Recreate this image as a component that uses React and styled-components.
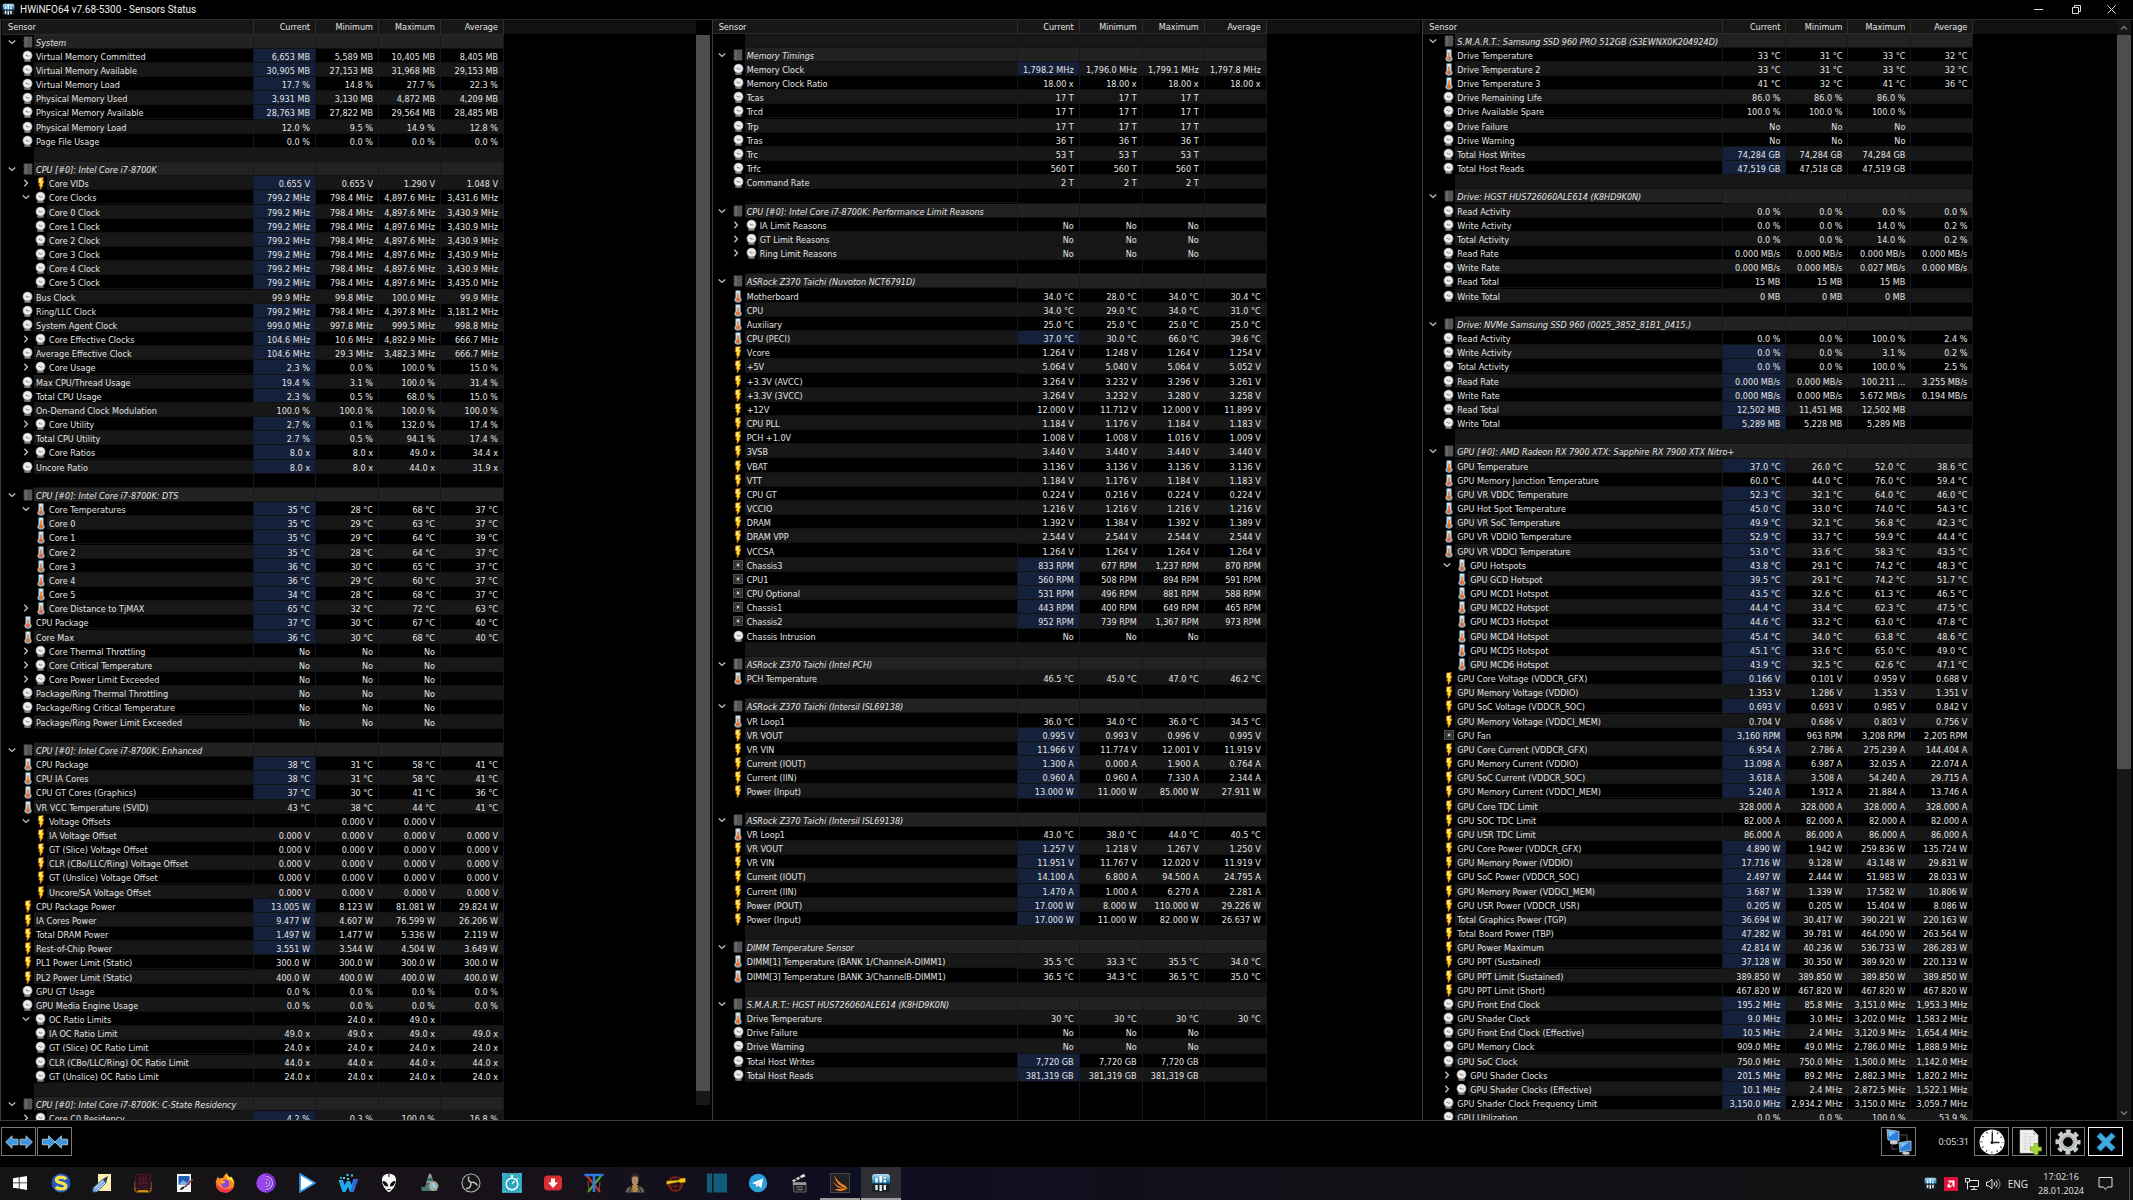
import React from 'react'
import styled, { createGlobalStyle } from 'styled-components';

const GlobalStyle = createGlobalStyle`
  * {
    box-sizing: border-box;
  }

  body {
    margin: 0;
    background: #000;
    color: #e4e4e4;
    font-family: 'DejaVu Sans Condensed', 'DejaVu Sans', sans-serif;
    font-size: 9px;
    overflow: hidden;
  }

  button {
    margin: 0;
    padding: 0;
    border: 0;
    background: none;
    color: inherit;
    font: inherit;
  }

  svg {
    display: block;
    flex: none;
  }
`

const Window = styled.div`
    display: flex;
    flex-direction: column;
    height: 100vh;
`

const TitleBar = styled.header`
    display: flex;
    align-items: center;
    height: 20px;
    padding: 0 5px 0 2px;
    border-bottom: 1px solid #2c2c2c;
`

const Title = styled.h1`
    flex: 1;
    margin: 0 0 0 5px;
    font-family: Roboto, 'Open Sans', sans-serif;
    font-size: 10px;
    line-height: 18px;
    font-weight: 400;
    color: #f0f0f0;
`

const WindowButton = styled.button`
    display: flex;
    align-items: center;
    justify-content: center;
    width: 38px;
    height: 18px;

    &:last-child {
      width: 33px;
    }
`

const Panels = styled.main`
    display: flex;
    flex: 1;
    min-height: 0;
    border-bottom: 1px solid #3a3a3a;
`

const Panel = styled.section`
    display: flex;
    flex: 1;
    min-width: 0;
    padding-right: 2px;
    border-left: 1px solid #3a3a3a;

    &:first-child {
      padding-left: 1px;
    }
`

const List = styled.div`
    flex: 1;
    min-width: 0;
    overflow: hidden;
    background: linear-gradient(#111 14px, #000 14px);
`

const Table = styled.table`
    table-layout: fixed;
    width: 0;
    border-spacing: 0;
    white-space: nowrap;
    line-height: 12px;
`

const HeadCell = styled.th`
    height: ${props => props.$tall ? 15 : 14}px;
    padding: 0 5px 0 6px;
    border-right: 1px solid #2e2e2e;
    border-bottom: 1px solid #2a2a2a;
    background: #171717;
    font-weight: 400;
    text-align: ${props => props.$left ? 'left' : 'right'};
`

const rowColors = { head: '#222', stripe: '#171717', plain: '#000' }

const Row = styled.tr`
    height: 14px;
    --row: ${props => rowColors[props.$kind]};

    &:nth-child(6n) {
      height: 15px;
    }
`

const Cell = styled.td`
    padding: 2px 5px 0 0;
    border-right: 1px solid #101a26;
    background: ${props => props.$hot ? '#15213a' : 'var(--row)'};
    box-shadow: inset 0 -1px #111;
    text-align: right;
    vertical-align: top;
`

const NameCell = styled.th`
    padding: 0;
    border-right: 1px solid #101a26;
    font-weight: 400;
    text-align: left;
    vertical-align: top;
`

const Name = styled.div`
    display: flex;
    height: 14px;
`

const Slot = styled.span`
    display: flex;
    flex: none;
    align-items: center;
    justify-content: ${props => props.$start ? 'flex-start' : 'center'};
    width: ${props => props.$wide ? 19 : 13}px;
`

const NameText = styled.span`
    flex: 1;
    padding: 2px 0 0 2px;
    background: var(--row);
    box-shadow: inset 0 -1px #111;
    font-style: ${props => props.$head ? 'italic' : 'normal'};
`

const Toggle = styled.button`
    display: flex;
    align-items: center;
    justify-content: center;
    width: 9px;
    height: 13px;
`

const Filler = styled.td`
    height: 60px;
    border-right: 1px solid #101a26;
`

const ScrollBar = styled.div`
    display: flex;
    flex-direction: column;
    width: 14px;
`

const ScrollArrow = styled.button`
    display: flex;
    align-items: center;
    justify-content: center;
    height: 15px;
    background: #171717;
    visibility: ${props => props.$lit ? 'visible' : 'hidden'};
`

const Thumb = styled.div`
    flex: ${props => props.$part};
    background: #4d4d4d;
`

const Track = styled.div`
    flex: ${props => props.$part};
    background: #171717;
`

const Toolbar = styled.div`
    display: flex;
    align-items: center;
    gap: 3px;
    height: 46px;
    padding: 0 10px 5px 1px;
`

const ToolGroup = styled.div`
    display: flex;
    gap: 1px;
    flex: 1;
`

const ToolButton = styled.button`
    display: flex;
    align-items: center;
    justify-content: center;
    width: 35px;
    height: 29px;
    border: 1px solid ${props => props.$focused ? '#f2f2f2' : '#777'};
`

const Elapsed = styled.span`
    width: 52px;
    padding-right: 2px;
    text-align: right;
    font-family: 'Open Sans', 'Noto Sans', sans-serif;
    font-size: 9px;
`

const TaskBar = styled.footer`
    display: flex;
    align-items: center;
    height: 33px;
    background: linear-gradient(90deg, #141414, #17121a 26%, #0e0e22 40%, #111118 62%, #141414);
    font-family: 'Open Sans', 'Noto Sans', sans-serif;
`

const Tasks = styled.nav`
    display: flex;
    flex: 1;
    gap: 1px;
    height: 33px;
`

const Task = styled.button`
    display: flex;
    align-items: center;
    justify-content: center;
    width: 40px;
    border-bottom: 2px solid ${props => props.$running ? '#9d9d9d' : 'transparent'};
    background: ${props => props.$active ? '#2e2e33' : 'none'};
`

const Tray = styled.div`
    display: flex;
    align-items: center;
    gap: 7px;
    height: 33px;
    font-size: 10px;
`

const Clock = styled.time`
    margin: 0 7px 0 3px;
    text-align: center;
    font-size: 9px;
    line-height: 14px;
`

const ShowDesktop = styled.button`
    width: 4px;
    height: 33px;
    margin-left: 9px;
    border-left: 1px solid #4a4a4a;
`

/* row icons */

const ChipIcon = () => (
    <svg width="10" height="13" viewBox="0 0 10 13">
        <path d="M0 2h10M0 4.5h10M0 7h10M0 9.5h10" stroke="#3c3c3c" />
        <rect x="1" y="0.5" width="8" height="11" fill="#555" />
        <path d="M2 1h2v10H2z" fill="#686868" />
    </svg>
)

const DialIcon = () => (
    <svg width="11" height="13" viewBox="0 0 11 13">
        <ellipse cx="5.5" cy="10.4" rx="3.6" ry="1.5" fill="#6d6d6d" />
        <circle cx="5.5" cy="5.6" r="4.9" fill="#a2a2a2" />
        <circle cx="5.5" cy="5.5" r="4" fill="#ececec" />
        <path d="M5.6 6 3.8 5" stroke="#6a6a6a" />
        <path d="M5.4 6h2.3" stroke="#a98f8f" />
    </svg>
)

const ThermoIcon = () => (
    <svg width="8" height="13" viewBox="0 0 8 13">
        <path d="M1.4 .4H6.6V7.4Q8 8.800 7.600 10.800 6.600 12.800 4 12.800T.4 10.800Q0 8.800 1.400 7.400Z" fill="#8fb9d3" />
        <path d="M2.4 .8H5.6V8H2.400Z" fill="#d9e8f0" />
        <path d="M4 3.600v6" stroke="#ee7a34" strokeWidth="1.700" />
        <circle cx="4" cy="9.600" r="2" fill="#ee6a1f" />
    </svg>
)

const BoltIcon = () => (
    <svg width="8" height="13" viewBox="0 0 8 13">
        <path d="M1.6 1 6.4.4 5.6 3.8 7 4 5.4 8 6.2 8.2 3.2 12.8 3 9 1.8 8.8 2.6 6 1.2 5.8Z" fill="#ffd924" stroke="#b8611c" strokeWidth=".7" />
        <path d="M2.6 1.6 4.4 1.4 3.6 5 2.2 5Z" fill="#fff6b0" />
    </svg>
)

const FanIcon = () => (
    <svg width="10" height="11" viewBox="0 0 10 11">
        <rect x=".5" y=".5" width="9" height="9" fill="#242424" stroke="#515151" />
        <path d="M2 2l6 6M8 2 2 8M5 1.5v7M1.5 5h7" stroke="#737373" strokeWidth=".7" />
        <circle cx="5" cy="5" r="1.2" fill="#d8c4c4" />
    </svg>
)

const rowIcons = { dial: DialIcon, temp: ThermoIcon, volt: BoltIcon, fan: FanIcon }

const Chevron = ({ open }) => (
    <svg width="8" height="8" viewBox="0 0 8 8" fill="none" stroke="#bdbdbd" strokeWidth="1.4">
        <path d={open ? 'M.8 2.4 4 5.4 7.2 2.4' : 'M2.4 .8 5.4 4 2.4 7.2'} />
    </svg>
)

/* window and toolbar icons */

const AppIcon = ({ size }) => (
    <svg width={size} height={size} viewBox="0 0 20 20">
        <defs>
            <linearGradient id="appSky" x2="0" y2="1">
                <stop offset="0" stopColor="#b5dff2" />
                <stop offset="1" stopColor="#0a6ba6" />
            </linearGradient>
        </defs>
        <rect x="1" y="1" width="18" height="18" rx="3" fill="#1b2228" />
        <path d="M1 10.5V4q0-3 3-3h12q3 0 3 3v6.5z" fill="url(#appSky)" />
        <path d="M5.5 5v4.5M9.7 3v6.5M13.8 7v2.5" stroke="#fff" strokeWidth="2.4" />
        <path d="M5.5 12v5M9.7 12v6M13.8 12v5" stroke="#e6eaec" strokeWidth="2.4" />
        <path d="M13.8 4v1.5" stroke="#fff" strokeWidth="2" />
    </svg>
)

const ExpandIcon = () => (
    <svg width="28" height="14" viewBox="0 0 28 14" fill="#3c97e0" stroke="#c9d6e0" strokeWidth=".8">
        <path d="M.6 7 7 .8v3.4h6v5.6H7v3.4Z" />
        <path d="M27.4 7 21 .8v3.4h-6v5.6h6v3.4Z" />
    </svg>
)

const ShrinkIcon = () => (
    <svg width="28" height="14" viewBox="0 0 28 14" fill="#3c97e0" stroke="#c9d6e0" strokeWidth=".8">
        <path d="M14 7 7.6 .8v3.4H1.4v5.6h6.2v3.4Z" />
        <path d="M14 7 20.4 .8v3.4h6.2v5.6h-6.2v3.4Z" />
    </svg>
)

const NetworkIcon = () => (
    <svg width="26" height="26" viewBox="0 0 26 26">
        <path d="M14 6h7v6M6 15v5h5" fill="none" stroke="#555" />
        <path d="M4 12h7l1 2.5q-4 1.8-8 0zM17 23h6l1 2q-4 1.5-8 0z" fill="#c9ccce" />
        <path d="M1 .5l12 2v9.5L2 11Z" fill="#2b7fd8" stroke="#c7d4df" strokeWidth=".8" />
        <path d="M2 1.5l8 1.4L3 8Z" fill="#7fc0f5" />
        <path d="M13 13.5l12-1.5v9.5l-11 1.5Z" fill="#2b7fd8" stroke="#c7d4df" strokeWidth=".8" />
        <path d="M14 14.2l9-1.2-8 6Z" fill="#7fc0f5" />
    </svg>
)

const ClockIcon = () => (
    <svg width="26" height="26" viewBox="0 0 26 26">
        <circle cx="13" cy="13" r="12.5" fill="#fff" />
        <circle cx="13" cy="13" r="10.4" fill="none" stroke="#333" strokeWidth="2" strokeDasharray="1 4.445" strokeDashoffset=".5" />
        <path d="M13.3 3.5V14M12 13.4h8.5" stroke="#222" strokeWidth="1.5" />
        <circle cx="13" cy="13.4" r="1.5" fill="#222" />
    </svg>
)

const LogIcon = () => (
    <svg width="24" height="26" viewBox="0 0 24 26">
        <path d="M2 1h13l5 5v18H2Z" fill="#f3f3f1" stroke="#bdbdbd" strokeWidth=".6" />
        <path d="M15 1v5h5Z" fill="#c8c8c8" />
        <path d="M4 5h9M4 8h14M4 11h14M4 14h14M4 17h10M4 20h9M7 4v18M12 7v15" stroke="#cfcfcf" strokeWidth=".7" />
        <path d="M16 14.5h4v3.5h3.5v4H20v3.5h-4V22h-3.5v-4H16Z" fill="#a6d83c" stroke="#6f9e1c" strokeWidth=".7" />
    </svg>
)

const GearIcon = () => (
    <svg width="26" height="26" viewBox="0 0 26 26">
        <circle cx="13" cy="13" r="10.8" fill="none" stroke="#c9cccd" strokeWidth="3.6" strokeDasharray="4.8 3.683" strokeDashoffset="2.4" />
        <circle cx="13" cy="13" r="7.2" fill="none" stroke="#c9cccd" strokeWidth="5" />
        <circle cx="13" cy="13" r="6.2" fill="none" stroke="#9b9fa1" />
        <circle cx="13" cy="13" r="4.6" fill="#050505" />
    </svg>
)

const ExitIcon = () => (
    <svg width="20" height="20" viewBox="0 0 20 20">
        <path d="M4.5 .8 10 6.2 15.5 .8 19.2 4.5 13.7 10 19.2 15.5 15.5 19.2 10 13.8 4.5 19.2 .8 15.5 6.3 10 .8 4.5Z" fill="#41aae0" stroke="#1b6fa3" strokeWidth=".7" />
    </svg>
)

/* taskbar icons, all on a 20 unit grid */

const Glyph = ({ children, size = 20 }) => (
    <svg width={size} height={size} viewBox="0 0 20 20" fill="none">{children}</svg>
)

const tasks = [
    { name: 'Start', icon: <Glyph><path d="M3 5.2 8.8 4.3v5.2H3ZM9.6 4.2 17 3v6.5H9.6ZM3 10.3h5.8v5.2L3 14.7ZM9.6 10.3H17v6.6l-7.4-1.2Z" fill="#fff" /></Glyph> },
    { name: 'Search', icon: (
        <Glyph>
            <circle cx="10" cy="10" r="9.5" fill="#2357b8" />
            <path d="M15 6.2C13 3.6 5.5 3.3 5.5 7c0 3.8 9.3 2 9.3 6.2 0 3.7-8 3.3-9.8 .6" stroke="#f7e04b" strokeWidth="3.4" />
        </Glyph>
    ) },
    { name: 'Notes', icon: (
        <Glyph>
            <path d="M6 1h13v17H6Z" fill="#fbeeae" />
            <path d="M1 15 11 6l3 4-9 9H1Z" fill="#7fa8dc" stroke="#3f6496" strokeWidth=".8" />
            <path d="m11 6 5-3-2 7Z" fill="#26323f" />
            <path d="m3 15 8-7M5 17l8-7" stroke="#d6e5f7" />
        </Glyph>
    ) },
    { name: 'Processor', icon: (
        <Glyph>
            <path d="M2 9v7q0 3 3 3h10q3 0 3-3V9" stroke="#8a5c0d" strokeWidth="1.6" />
            <rect x="2.5" y="1.5" width="15" height="14" rx="2" fill="#2b101a" stroke="#471a2a" />
            <path d="M7 3v11M10 3v11M13 3v11M5 6h10M5 10h10" stroke="#5c2438" strokeWidth=".8" />
            <path d="M5 18h10" stroke="#e8a414" strokeWidth="1.6" />
        </Glyph>
    ) },
    { name: 'Image Editor', icon: (
        <Glyph>
            <path d="M3 1h14v18H3Z" fill="#f4f6f8" />
            <path d="M4.5 3h11v9h-11Z" fill="#1d5fae" />
            <path d="M4.5 12 9 7l4 3 2.5-3v5Z" fill="#79b1e2" />
            <path d="m19 6-8 8" stroke="#a12a2a" strokeWidth="1.6" />
            <path d="M6 17q0-3 5-4-1 4-5 4Z" fill="#222" />
        </Glyph>
    ) },
    { name: 'Firefox', icon: (
        <Glyph>
            <path d="M10 19.500C4.5 19.5 .8 15.5 .8 10.5c0-3 1-5.500 2.600-7l.6 2.200C5.300 4.600 6.500 5 8 5.300 8.500 3 10 1.200 12 .3c0 2 1.600 3 3 4.400l.8-1.200c2 1.800 3.500 4.200 3.500 7.200 0 5-4 8.800-9.300 8.800Z" fill="#ff8a1e" />
            <path d="M12 .3c0 2 1.600 3 3 4.400l.8-1.200c2 1.800 3.200 4.500 2.800 7.500-.5-3-3-4-5.600-4.500C11 5 10.800 2 12 .3Z" fill="#ffdf3c" />
            <path d="M1 9c0 7 4 10.500 9 10.500 4.500 0 8-2.500 9-6.500-2 2.500-5 3.500-8.500 3C6 15.500 3 13 1 9Z" fill="#f0374f" />
            <circle cx="10.300" cy="10.700" r="4" fill="#8a46e0" />
            <path d="M5.500 8c2-1 3.500 0 5 1-1 1-2 1.500-4 1.500" fill="#ffb02e" />
        </Glyph>
    ) },
    { name: 'Tor Browser', icon: (
        <Glyph>
            <circle cx="10" cy="10" r="9.7" fill="#9a45ee" />
            <path d="M10 .3a9.7 9.7 0 0 1 0 19.4Z" fill="#7a2fce" />
            <path d="M10 3.5a6.500 6.500 0 0 1 0 13M10 6.200a3.800 3.800 0 0 1 0 7.600M10 8.800a1.300 1.300 0 0 1 0 2.500" stroke="#d6b8f5" strokeWidth="1.1" />
        </Glyph>
    ) },
    { name: 'Media Player', icon: <Glyph><path d="M3 1 18 10 3 19Z" fill="#fff" stroke="#2b8fe6" strokeWidth="1.8" strokeLinejoin="round" /></Glyph> },
    { name: 'Wave', icon: (
        <Glyph>
            <path d="M.5 7H5L6.500 12 9 8h3l1.500 4L15.500 6H20L15.500 19H12L10 14 7.500 19H4.500Z" fill="#20a9f0" />
            <path d="M15.500 6H20L15.500 19H12.500Z" fill="#3566d8" />
            <path d="M5 4h2v2H5zM8.500 1h2v2h-2zM9 5h2v2H9zM13 1.500h2v2h-2zM2 4h2v1.500H2z" fill="#35d0f2" />
        </Glyph>
    ) },
    { name: 'foobar2000', icon: (
        <Glyph>
            <path d="M10 .8c5 0 7.500 3 7 7.500-.5 4.500-3.500 9-7 11-3.500-2-6.500-6.500-7-11C2.500 3.800 5 .8 10 .8Z" fill="#f6f6f6" />
            <path d="M3.500 8q5 0 5.700 5.500Q4 13.500 3.500 8ZM16.500 8q-5 0-5.700 5.500Q16 13.500 16.500 8Z" fill="#0b0b0b" />
            <path d="M8.500 16.500h3M10 1v3" stroke="#0b0b0b" />
        </Glyph>
    ) },
    { name: 'Disk Tool', icon: (
        <Glyph>
            <path d="M9 .8h2l4 13H5Z" fill="#8d989a" />
            <path d="M8 5h4l1 3H7ZM6.400 10h7.400l1 3H5.500Z" fill="#2d6f70" />
            <path d="M1 14h14l3 4H2Z" fill="#427a7b" />
            <circle cx="13.500" cy="13" r="4.500" fill="#86b6cf" stroke="#c99445" />
            <path d="M13.500 10v3l2 1" stroke="#f2e6cc" />
        </Glyph>
    ) },
    { name: 'OBS Studio', icon: (
        <Glyph>
            <circle cx="10" cy="10" r="9" fill="#161618" stroke="#b0b0b2" strokeWidth="1.1" />
            <path d="M8 3.500q-2 4 2 6M16.500 12.500q-2.500-4-6.500-3M5 15.500q5 .5 5-6" stroke="#bcbcbe" strokeWidth="1.5" />
        </Glyph>
    ) },
    { name: 'Stopwatch', icon: (
        <Glyph>
            <rect width="20" height="20" fill="#29a5bd" />
            <path d="M0 2h20M0 18h20M2 0v20M18 0v20" stroke="#7fd2df" strokeDasharray="1 2" />
            <circle cx="10" cy="11" r="5.8" stroke="#f2fbfc" strokeWidth="1.5" />
            <path d="M8.500 3h3M10 3v2M10 11l2.500-3M15 5l1 1" stroke="#f2fbfc" strokeWidth="1.3" />
        </Glyph>
    ) },
    { name: 'Downloader', icon: (
        <Glyph>
            <rect x="1" y="2.500" width="18" height="15" rx="4" fill="#d92d33" />
            <path d="M8 5.500h4v4h3L10 15 5 9.500h3Z" fill="#fff" />
        </Glyph>
    ) },
    { name: 'Converter', icon: (
        <Glyph>
            <path d="M3 3 16 19" stroke="#c93434" strokeWidth="2" />
            <path d="M17 3 4 19" stroke="#48b638" strokeWidth="2" />
            <path d="M4 8l1 11M16 8l-1 11" stroke="#9b4b2a" />
            <path d="M.5 2h19M10 2v17" stroke="#2c7be6" strokeWidth="2.6" />
        </Glyph>
    ) },
    { name: 'Game', icon: (
        <Glyph>
            <path d="M.5 19.500Q1 14 7 13h6q6 1 6.500 6.500Z" fill="#67615c" />
            <path d="M7 12h6l-1 7H8Z" fill="#b98a3b" />
            <path d="M6.500 5Q6 .8 9.500 .8 14 .8 13.500 5L13 10q-3 5-6 0Z" fill="#b08a6b" />
            <path d="M6 6Q5.500 .5 9.500 .5 14.500 .5 13.500 6L12 3.500H8Z" fill="#2d2521" />
            <path d="m7 13-3 6M13 13l3 6" stroke="#221f1d" />
        </Glyph>
    ) },
    { name: 'Web Tool', icon: (
        <Glyph>
            <circle cx="9.500" cy="11" r="7" stroke="#8a2411" strokeWidth="1.4" />
            <path d="M9.500 4v14M3 13h13M5.500 6q-2.500 5 0 10M13.500 6q2.500 5 0 10" stroke="#7a1f10" />
            <path d="M.5 8 13 7l1-1.800 5.500-.2v4.500l-5.500 .5-1-1L.5 11.500Z" fill="#f5c418" stroke="#5e4900" strokeWidth=".5" />
        </Glyph>
    ) },
    { name: 'Files', icon: <Glyph><path d="M0 .5h5v19H0ZM6.500 .5H20v19H6.500Z" fill="#115d77" /></Glyph> },
    { name: 'Telegram', icon: (
        <Glyph>
            <circle cx="10" cy="10" r="9.2" fill="#29a0dc" />
            <path d="M4 10 15 5.500 13.500 15 10 12.600 8.500 14.500 8 11.500Z" fill="#fff" />
            <path d="m8 11.500 5-3.800-3 4.700Z" fill="#bfe0f2" />
        </Glyph>
    ) },
    { name: 'Clapper', icon: (
        <Glyph>
            <path d="M4 9.500h13v9.500H5Z" fill="#1d1d1d" stroke="#6a6a6a" />
            <path d="M3 7.500 15 .8l1.500 2.500L4.500 9Z" fill="#ddd" />
            <path d="m6 5.500 2 2M10 3.500l2 2" stroke="#222" strokeWidth="1.5" />
            <path d="M4 9.500h13v2.500H4Z" fill="#999" />
            <path d="M7 14h7M8 16.500h6" stroke="#888" />
        </Glyph>
    ) },
    { name: 'Benchmark', running: true, icon: (
        <Glyph>
            <rect x=".5" y=".5" width="19" height="19" fill="#212124" stroke="#48484c" />
            <path d="M4 2q3 6 9 9.500 4 2 4.500 4.500Q6 13 4 2ZM2.500 7.500Q7 14.500 17 15.500 7 17.500 2.500 7.500ZM4.500 16h12Q10 20 4.500 16Z" fill="#f58220" />
        </Glyph>
    ) },
    { name: 'HWiNFO64', running: true, active: true, icon: <AppIcon size={20} /> },
]

/*
 * Rows are [icon, label, values, flags]
 * h = value is changing, o / c = open / closed group, n = child of a group
 */

const noes = ['No', 'No', 'No', '']
const same = (value, count = 4) => [0, 1, 2, 3].map(i => i < count ? value : '')

const panels = [
    {
        name: 'System and CPU',
        widths: [252, 62, 63, 62, 63],
        tall: true,
        scroll: { thumb: 1056, rest: 14 },
        groups: [
            { title: 'System', rows: [
                ['dial', 'Virtual Memory Committed', ['6,653 MB', '5,589 MB', '10,405 MB', '8,405 MB'], 'h'],
                ['dial', 'Virtual Memory Available', ['30,905 MB', '27,153 MB', '31,968 MB', '29,153 MB'], 'h'],
                ['dial', 'Virtual Memory Load', ['17.7 %', '14.8 %', '27.7 %', '22.3 %'], 'h'],
                ['dial', 'Physical Memory Used', ['3,931 MB', '3,130 MB', '4,872 MB', '4,209 MB'], 'h'],
                ['dial', 'Physical Memory Available', ['28,763 MB', '27,822 MB', '29,564 MB', '28,485 MB'], 'h'],
                ['dial', 'Physical Memory Load', ['12.0 %', '9.5 %', '14.9 %', '12.8 %']],
                ['dial', 'Page File Usage', same('0.0 %')],
            ] },
            { title: 'CPU [#0]: Intel Core i7-8700K', rows: [
                ['volt', 'Core VIDs', ['0.655 V', '0.655 V', '1.290 V', '1.048 V'], 'hc'],
                ['dial', 'Core Clocks', ['799.2 MHz', '798.4 MHz', '4,897.6 MHz', '3,431.6 MHz'], 'ho'],
                ['dial', 'Core 0 Clock', ['799.2 MHz', '798.4 MHz', '4,897.6 MHz', '3,430.9 MHz'], 'hn'],
                ['dial', 'Core 1 Clock', ['799.2 MHz', '798.4 MHz', '4,897.6 MHz', '3,430.9 MHz'], 'hn'],
                ['dial', 'Core 2 Clock', ['799.2 MHz', '798.4 MHz', '4,897.6 MHz', '3,430.9 MHz'], 'hn'],
                ['dial', 'Core 3 Clock', ['799.2 MHz', '798.4 MHz', '4,897.6 MHz', '3,430.9 MHz'], 'hn'],
                ['dial', 'Core 4 Clock', ['799.2 MHz', '798.4 MHz', '4,897.6 MHz', '3,430.9 MHz'], 'hn'],
                ['dial', 'Core 5 Clock', ['799.2 MHz', '798.4 MHz', '4,897.6 MHz', '3,435.0 MHz'], 'hn'],
                ['dial', 'Bus Clock', ['99.9 MHz', '99.8 MHz', '100.0 MHz', '99.9 MHz']],
                ['dial', 'Ring/LLC Clock', ['799.2 MHz', '798.4 MHz', '4,397.8 MHz', '3,181.2 MHz'], 'h'],
                ['dial', 'System Agent Clock', ['999.0 MHz', '997.8 MHz', '999.5 MHz', '998.8 MHz'], 'h'],
                ['dial', 'Core Effective Clocks', ['104.6 MHz', '10.6 MHz', '4,892.9 MHz', '666.7 MHz'], 'hc'],
                ['dial', 'Average Effective Clock', ['104.6 MHz', '29.3 MHz', '3,482.3 MHz', '666.7 MHz'], 'h'],
                ['dial', 'Core Usage', ['2.3 %', '0.0 %', '100.0 %', '15.0 %'], 'hc'],
                ['dial', 'Max CPU/Thread Usage', ['19.4 %', '3.1 %', '100.0 %', '31.4 %'], 'h'],
                ['dial', 'Total CPU Usage', ['2.3 %', '0.5 %', '68.0 %', '15.0 %'], 'h'],
                ['dial', 'On-Demand Clock Modulation', same('100.0 %')],
                ['dial', 'Core Utility', ['2.7 %', '0.1 %', '132.0 %', '17.4 %'], 'hc'],
                ['dial', 'Total CPU Utility', ['2.7 %', '0.5 %', '94.1 %', '17.4 %'], 'h'],
                ['dial', 'Core Ratios', ['8.0 x', '8.0 x', '49.0 x', '34.4 x'], 'hc'],
                ['dial', 'Uncore Ratio', ['8.0 x', '8.0 x', '44.0 x', '31.9 x'], 'h'],
            ] },
            { title: 'CPU [#0]: Intel Core i7-8700K: DTS', rows: [
                ['temp', 'Core Temperatures', ['35 °C', '28 °C', '68 °C', '37 °C'], 'ho'],
                ['temp', 'Core 0', ['35 °C', '29 °C', '63 °C', '37 °C'], 'hn'],
                ['temp', 'Core 1', ['35 °C', '29 °C', '64 °C', '39 °C'], 'hn'],
                ['temp', 'Core 2', ['35 °C', '28 °C', '64 °C', '37 °C'], 'hn'],
                ['temp', 'Core 3', ['36 °C', '30 °C', '65 °C', '37 °C'], 'hn'],
                ['temp', 'Core 4', ['36 °C', '29 °C', '60 °C', '37 °C'], 'hn'],
                ['temp', 'Core 5', ['34 °C', '28 °C', '68 °C', '37 °C'], 'hn'],
                ['temp', 'Core Distance to TjMAX', ['65 °C', '32 °C', '72 °C', '63 °C'], 'hc'],
                ['temp', 'CPU Package', ['37 °C', '30 °C', '67 °C', '40 °C'], 'h'],
                ['temp', 'Core Max', ['36 °C', '30 °C', '68 °C', '40 °C'], 'h'],
                ['dial', 'Core Thermal Throttling', noes, 'c'],
                ['dial', 'Core Critical Temperature', noes, 'c'],
                ['dial', 'Core Power Limit Exceeded', noes, 'c'],
                ['dial', 'Package/Ring Thermal Throttling', noes],
                ['dial', 'Package/Ring Critical Temperature', noes],
                ['dial', 'Package/Ring Power Limit Exceeded', noes],
            ] },
            { title: 'CPU [#0]: Intel Core i7-8700K: Enhanced', rows: [
                ['temp', 'CPU Package', ['38 °C', '31 °C', '58 °C', '41 °C'], 'h'],
                ['temp', 'CPU IA Cores', ['38 °C', '31 °C', '58 °C', '41 °C'], 'h'],
                ['temp', 'CPU GT Cores (Graphics)', ['37 °C', '30 °C', '41 °C', '36 °C'], 'h'],
                ['temp', 'VR VCC Temperature (SVID)', ['43 °C', '38 °C', '44 °C', '41 °C']],
                ['volt', 'Voltage Offsets', ['', '0.000 V', '0.000 V', ''], 'o'],
                ['volt', 'IA Voltage Offset', same('0.000 V'), 'n'],
                ['volt', 'GT (Slice) Voltage Offset', same('0.000 V'), 'n'],
                ['volt', 'CLR (CBo/LLC/Ring) Voltage Offset', same('0.000 V'), 'n'],
                ['volt', 'GT (Unslice) Voltage Offset', same('0.000 V'), 'n'],
                ['volt', 'Uncore/SA Voltage Offset', same('0.000 V'), 'n'],
                ['volt', 'CPU Package Power', ['13.005 W', '8.123 W', '81.081 W', '29.824 W'], 'h'],
                ['volt', 'IA Cores Power', ['9.477 W', '4.607 W', '76.599 W', '26.206 W'], 'h'],
                ['volt', 'Total DRAM Power', ['1.497 W', '1.477 W', '5.336 W', '2.119 W'], 'h'],
                ['volt', 'Rest-of-Chip Power', ['3.551 W', '3.544 W', '4.504 W', '3.649 W'], 'h'],
                ['volt', 'PL1 Power Limit (Static)', same('300.0 W')],
                ['volt', 'PL2 Power Limit (Static)', same('400.0 W')],
                ['dial', 'GPU GT Usage', same('0.0 %')],
                ['dial', 'GPU Media Engine Usage', same('0.0 %')],
                ['dial', 'OC Ratio Limits', ['', '24.0 x', '49.0 x', ''], 'o'],
                ['dial', 'IA OC Ratio Limit', same('49.0 x'), 'n'],
                ['dial', 'GT (Slice) OC Ratio Limit', same('24.0 x'), 'n'],
                ['dial', 'CLR (CBo/LLC/Ring) OC Ratio Limit', same('44.0 x'), 'n'],
                ['dial', 'GT (Unslice) OC Ratio Limit', same('24.0 x'), 'n'],
            ] },
            { title: 'CPU [#0]: Intel Core i7-8700K: C-State Residency', rows: [
                ['dial', 'Core C0 Residency', ['4.2 %', '0.3 %', '100.0 %', '16.8 %'], 'hc'],
            ] },
        ],
    },
    {
        name: 'Memory and Motherboard',
        widths: [305, 62, 63, 62, 62],
        blankFirst: true,
        flipAt: 15,
        filler: true,
        groups: [
            { title: 'Memory Timings', rows: [
                ['dial', 'Memory Clock', ['1,798.2 MHz', '1,796.0 MHz', '1,799.1 MHz', '1,797.8 MHz'], 'h'],
                ['dial', 'Memory Clock Ratio', same('18.00 x')],
                ['dial', 'Tcas', same('17 T', 3)],
                ['dial', 'Trcd', same('17 T', 3)],
                ['dial', 'Trp', same('17 T', 3)],
                ['dial', 'Tras', same('36 T', 3)],
                ['dial', 'Trc', same('53 T', 3)],
                ['dial', 'Trfc', same('560 T', 3)],
                ['dial', 'Command Rate', same('2 T', 3)],
            ] },
            { title: 'CPU [#0]: Intel Core i7-8700K: Performance Limit Reasons', rows: [
                ['dial', 'IA Limit Reasons', noes, 'c'],
                ['dial', 'GT Limit Reasons', noes, 'c'],
                ['dial', 'Ring Limit Reasons', noes, 'c'],
            ] },
            { title: 'ASRock Z370 Taichi (Nuvoton NCT6791D)', rows: [
                ['temp', 'Motherboard', ['34.0 °C', '28.0 °C', '34.0 °C', '30.4 °C']],
                ['temp', 'CPU', ['34.0 °C', '29.0 °C', '34.0 °C', '31.0 °C']],
                ['temp', 'Auxiliary', same('25.0 °C')],
                ['temp', 'CPU (PECI)', ['37.0 °C', '30.0 °C', '66.0 °C', '39.6 °C'], 'h'],
                ['volt', 'Vcore', ['1.264 V', '1.248 V', '1.264 V', '1.254 V']],
                ['volt', '+5V', ['5.064 V', '5.040 V', '5.064 V', '5.052 V']],
                ['volt', '+3.3V (AVCC)', ['3.264 V', '3.232 V', '3.296 V', '3.261 V']],
                ['volt', '+3.3V (3VCC)', ['3.264 V', '3.232 V', '3.280 V', '3.258 V']],
                ['volt', '+12V', ['12.000 V', '11.712 V', '12.000 V', '11.899 V']],
                ['volt', 'CPU PLL', ['1.184 V', '1.176 V', '1.184 V', '1.183 V']],
                ['volt', 'PCH +1.0V', ['1.008 V', '1.008 V', '1.016 V', '1.009 V']],
                ['volt', '3VSB', same('3.440 V')],
                ['volt', 'VBAT', same('3.136 V')],
                ['volt', 'VTT', ['1.184 V', '1.176 V', '1.184 V', '1.183 V']],
                ['volt', 'CPU GT', ['0.224 V', '0.216 V', '0.224 V', '0.224 V']],
                ['volt', 'VCCIO', same('1.216 V')],
                ['volt', 'DRAM', ['1.392 V', '1.384 V', '1.392 V', '1.389 V']],
                ['volt', 'DRAM VPP', same('2.544 V')],
                ['volt', 'VCCSA', same('1.264 V')],
                ['fan', 'Chassis3', ['833 RPM', '677 RPM', '1,237 RPM', '870 RPM'], 'h'],
                ['fan', 'CPU1', ['560 RPM', '508 RPM', '894 RPM', '591 RPM'], 'h'],
                ['fan', 'CPU Optional', ['531 RPM', '496 RPM', '881 RPM', '588 RPM'], 'h'],
                ['fan', 'Chassis1', ['443 RPM', '400 RPM', '649 RPM', '465 RPM'], 'h'],
                ['fan', 'Chassis2', ['952 RPM', '739 RPM', '1,367 RPM', '973 RPM'], 'h'],
                ['dial', 'Chassis Intrusion', noes],
            ] },
            { title: 'ASRock Z370 Taichi (Intel PCH)', rows: [
                ['temp', 'PCH Temperature', ['46.5 °C', '45.0 °C', '47.0 °C', '46.2 °C']],
            ] },
            { title: 'ASRock Z370 Taichi (Intersil ISL69138)', rows: [
                ['temp', 'VR Loop1', ['36.0 °C', '34.0 °C', '36.0 °C', '34.5 °C']],
                ['volt', 'VR VOUT', ['0.995 V', '0.993 V', '0.996 V', '0.995 V'], 'h'],
                ['volt', 'VR VIN', ['11.966 V', '11.774 V', '12.001 V', '11.919 V'], 'h'],
                ['volt', 'Current (IOUT)', ['1.300 A', '0.000 A', '1.900 A', '0.764 A'], 'h'],
                ['volt', 'Current (IIN)', ['0.960 A', '0.960 A', '7.330 A', '2.344 A'], 'h'],
                ['volt', 'Power (Input)', ['13.000 W', '11.000 W', '85.000 W', '27.911 W'], 'h'],
            ] },
            { title: 'ASRock Z370 Taichi (Intersil ISL69138)', rows: [
                ['temp', 'VR Loop1', ['43.0 °C', '38.0 °C', '44.0 °C', '40.5 °C']],
                ['volt', 'VR VOUT', ['1.257 V', '1.218 V', '1.267 V', '1.250 V'], 'h'],
                ['volt', 'VR VIN', ['11.951 V', '11.767 V', '12.020 V', '11.919 V'], 'h'],
                ['volt', 'Current (IOUT)', ['14.100 A', '6.800 A', '94.500 A', '24.795 A'], 'h'],
                ['volt', 'Current (IIN)', ['1.470 A', '1.000 A', '6.270 A', '2.281 A'], 'h'],
                ['volt', 'Power (POUT)', ['17.000 W', '8.000 W', '110.000 W', '29.226 W'], 'h'],
                ['volt', 'Power (Input)', ['17.000 W', '11.000 W', '82.000 W', '26.637 W'], 'h'],
            ] },
            { title: 'DIMM Temperature Sensor', rows: [
                ['temp', 'DIMM[1] Temperature (BANK 1/ChannelA-DIMM1)', ['35.5 °C', '33.3 °C', '35.5 °C', '34.0 °C']],
                ['temp', 'DIMM[3] Temperature (BANK 3/ChannelB-DIMM1)', ['36.5 °C', '34.3 °C', '36.5 °C', '35.0 °C']],
            ] },
            { title: 'S.M.A.R.T.: HGST HUS726060ALE614 (K8HD9K0N)', rows: [
                ['temp', 'Drive Temperature', same('30 °C')],
                ['dial', 'Drive Failure', noes],
                ['dial', 'Drive Warning', noes],
                ['dial', 'Total Host Writes', same('7,720 GB', 3), 'h'],
                ['dial', 'Total Host Reads', same('381,319 GB', 3), 'h'],
            ] },
        ],
    },
    {
        name: 'Drives and GPU',
        widths: [300, 63, 62, 63, 62],
        scroll: { thumb: 734, rest: 336, lit: true },
        groups: [
            { title: 'S.M.A.R.T.: Samsung SSD 960 PRO 512GB (S3EWNX0K204924D)', rows: [
                ['temp', 'Drive Temperature', ['33 °C', '31 °C', '33 °C', '32 °C']],
                ['temp', 'Drive Temperature 2', ['33 °C', '31 °C', '33 °C', '32 °C']],
                ['temp', 'Drive Temperature 3', ['41 °C', '32 °C', '41 °C', '36 °C']],
                ['dial', 'Drive Remaining Life', same('86.0 %', 3)],
                ['dial', 'Drive Available Spare', same('100.0 %', 3)],
                ['dial', 'Drive Failure', noes],
                ['dial', 'Drive Warning', noes],
                ['dial', 'Total Host Writes', same('74,284 GB', 3), 'h'],
                ['dial', 'Total Host Reads', ['47,519 GB', '47,518 GB', '47,519 GB', ''], 'h'],
            ] },
            { title: 'Drive: HGST HUS726060ALE614 (K8HD9K0N)', rows: [
                ['dial', 'Read Activity', same('0.0 %')],
                ['dial', 'Write Activity', ['0.0 %', '0.0 %', '14.0 %', '0.2 %']],
                ['dial', 'Total Activity', ['0.0 %', '0.0 %', '14.0 %', '0.2 %']],
                ['dial', 'Read Rate', same('0.000 MB/s')],
                ['dial', 'Write Rate', ['0.000 MB/s', '0.000 MB/s', '0.027 MB/s', '0.000 MB/s']],
                ['dial', 'Read Total', same('15 MB', 3)],
                ['dial', 'Write Total', same('0 MB', 3)],
            ] },
            { title: 'Drive: NVMe Samsung SSD 960 (0025_3852_81B1_0415.)', rows: [
                ['dial', 'Read Activity', ['0.0 %', '0.0 %', '100.0 %', '2.4 %']],
                ['dial', 'Write Activity', ['0.0 %', '0.0 %', '3.1 %', '0.2 %'], 'h'],
                ['dial', 'Total Activity', ['0.0 %', '0.0 %', '100.0 %', '2.5 %'], 'h'],
                ['dial', 'Read Rate', ['0.000 MB/s', '0.000 MB/s', '100.211 ...', '3.255 MB/s'], 'h'],
                ['dial', 'Write Rate', ['0.000 MB/s', '0.000 MB/s', '5.672 MB/s', '0.194 MB/s'], 'h'],
                ['dial', 'Read Total', ['12,502 MB', '11,451 MB', '12,502 MB', ''], 'h'],
                ['dial', 'Write Total', ['5,289 MB', '5,228 MB', '5,289 MB', ''], 'h'],
            ] },
            { title: 'GPU [#0]: AMD Radeon RX 7900 XTX: Sapphire RX 7900 XTX Nitro+', rows: [
                ['temp', 'GPU Temperature', ['37.0 °C', '26.0 °C', '52.0 °C', '38.6 °C'], 'h'],
                ['temp', 'GPU Memory Junction Temperature', ['60.0 °C', '44.0 °C', '76.0 °C', '59.4 °C']],
                ['temp', 'GPU VR VDDC Temperature', ['52.3 °C', '32.1 °C', '64.0 °C', '46.0 °C'], 'h'],
                ['temp', 'GPU Hot Spot Temperature', ['45.0 °C', '33.0 °C', '74.0 °C', '54.3 °C'], 'h'],
                ['temp', 'GPU VR SoC Temperature', ['49.9 °C', '32.1 °C', '56.8 °C', '42.3 °C'], 'h'],
                ['temp', 'GPU VR VDDIO Temperature', ['52.9 °C', '33.7 °C', '59.9 °C', '44.4 °C'], 'h'],
                ['temp', 'GPU VR VDDCI Temperature', ['53.0 °C', '33.6 °C', '58.3 °C', '43.5 °C'], 'h'],
                ['temp', 'GPU Hotspots', ['43.8 °C', '29.1 °C', '74.2 °C', '48.3 °C'], 'ho'],
                ['temp', 'GPU GCD Hotspot', ['39.5 °C', '29.1 °C', '74.2 °C', '51.7 °C'], 'hn'],
                ['temp', 'GPU MCD1 Hotspot', ['43.5 °C', '32.6 °C', '61.3 °C', '46.5 °C'], 'hn'],
                ['temp', 'GPU MCD2 Hotspot', ['44.4 °C', '33.4 °C', '62.3 °C', '47.5 °C'], 'hn'],
                ['temp', 'GPU MCD3 Hotspot', ['44.6 °C', '33.2 °C', '63.0 °C', '47.8 °C'], 'hn'],
                ['temp', 'GPU MCD4 Hotspot', ['45.4 °C', '34.0 °C', '63.8 °C', '48.6 °C'], 'hn'],
                ['temp', 'GPU MCD5 Hotspot', ['45.1 °C', '33.6 °C', '65.0 °C', '49.0 °C'], 'hn'],
                ['temp', 'GPU MCD6 Hotspot', ['43.9 °C', '32.5 °C', '62.6 °C', '47.1 °C'], 'hn'],
                ['volt', 'GPU Core Voltage (VDDCR_GFX)', ['0.166 V', '0.101 V', '0.959 V', '0.688 V'], 'h'],
                ['volt', 'GPU Memory Voltage (VDDIO)', ['1.353 V', '1.286 V', '1.353 V', '1.351 V']],
                ['volt', 'GPU SoC Voltage (VDDCR_SOC)', ['0.693 V', '0.693 V', '0.985 V', '0.842 V'], 'h'],
                ['volt', 'GPU Memory Voltage (VDDCI_MEM)', ['0.704 V', '0.686 V', '0.803 V', '0.756 V']],
                ['fan', 'GPU Fan', ['3,160 RPM', '963 RPM', '3,208 RPM', '2,205 RPM'], 'h'],
                ['volt', 'GPU Core Current (VDDCR_GFX)', ['6.954 A', '2.786 A', '275.239 A', '144.404 A'], 'h'],
                ['volt', 'GPU Memory Current (VDDIO)', ['13.098 A', '6.987 A', '32.035 A', '22.074 A'], 'h'],
                ['volt', 'GPU SoC Current (VDDCR_SOC)', ['3.618 A', '3.508 A', '54.240 A', '29.715 A'], 'h'],
                ['volt', 'GPU Memory Current (VDDCI_MEM)', ['5.240 A', '1.912 A', '21.884 A', '13.746 A'], 'h'],
                ['volt', 'GPU Core TDC Limit', same('328.000 A')],
                ['volt', 'GPU SOC TDC Limit', same('82.000 A')],
                ['volt', 'GPU USR TDC Limit', same('86.000 A')],
                ['volt', 'GPU Core Power (VDDCR_GFX)', ['4.890 W', '1.942 W', '259.836 W', '135.724 W'], 'h'],
                ['volt', 'GPU Memory Power (VDDIO)', ['17.716 W', '9.128 W', '43.148 W', '29.831 W'], 'h'],
                ['volt', 'GPU SoC Power (VDDCR_SOC)', ['2.497 W', '2.444 W', '51.983 W', '28.033 W'], 'h'],
                ['volt', 'GPU Memory Power (VDDCI_MEM)', ['3.687 W', '1.339 W', '17.582 W', '10.806 W'], 'h'],
                ['volt', 'GPU USR Power (VDDCR_USR)', ['0.205 W', '0.205 W', '15.404 W', '8.086 W'], 'h'],
                ['volt', 'Total Graphics Power (TGP)', ['36.694 W', '30.417 W', '390.221 W', '220.163 W'], 'h'],
                ['volt', 'Total Board Power (TBP)', ['47.282 W', '39.781 W', '464.090 W', '263.564 W'], 'h'],
                ['volt', 'GPU Power Maximum', ['42.814 W', '40.236 W', '536.733 W', '286.283 W'], 'h'],
                ['volt', 'GPU PPT (Sustained)', ['37.128 W', '30.350 W', '389.920 W', '220.133 W'], 'h'],
                ['volt', 'GPU PPT Limit (Sustained)', same('389.850 W')],
                ['volt', 'GPU PPT Limit (Short)', same('467.820 W')],
                ['dial', 'GPU Front End Clock', ['195.2 MHz', '85.8 MHz', '3,151.0 MHz', '1,953.3 MHz'], 'h'],
                ['dial', 'GPU Shader Clock', ['9.0 MHz', '3.0 MHz', '3,202.0 MHz', '1,583.2 MHz'], 'h'],
                ['dial', 'GPU Front End Clock (Effective)', ['10.5 MHz', '2.4 MHz', '3,120.9 MHz', '1,654.4 MHz'], 'h'],
                ['dial', 'GPU Memory Clock', ['909.0 MHz', '49.0 MHz', '2,786.0 MHz', '1,888.9 MHz']],
                ['dial', 'GPU SoC Clock', ['750.0 MHz', '750.0 MHz', '1,500.0 MHz', '1,142.0 MHz']],
                ['dial', 'GPU Shader Clocks', ['201.5 MHz', '89.2 MHz', '2,882.3 MHz', '1,820.2 MHz'], 'hc'],
                ['dial', 'GPU Shader Clocks (Effective)', ['10.1 MHz', '2.4 MHz', '2,872.5 MHz', '1,522.1 MHz'], 'hc'],
                ['dial', 'GPU Shader Clock Frequency Limit', ['3,150.0 MHz', '2,934.2 MHz', '3,150.0 MHz', '3,059.7 MHz'], 'h'],
                ['dial', 'GPU Utilization', ['0.0 %', '0.0 %', '100.0 %', '53.9 %']],
            ] },
        ],
    },
]

const flatten = (panel) => {
    const lines = panel.blankFirst ? [{ blank: true }] : []
    panel.groups.forEach((group, i) => {
        if (i > 0) lines.push({ blank: true })
        lines.push({ title: group.title })
        group.rows.forEach(([icon, label, values, flags = '']) => {
            lines.push({ icon, label, values, flags })
        })
    })
    return lines
}

const blanks = ['', '', '', '']

const SensorRow = ({ line, odd }) => {
    const { blank, title, label, values = blanks, flags = '' } = line
    const RowIcon = title ? ChipIcon : rowIcons[line.icon]
    const isGroup = flags.includes('o') || flags.includes('c')
    const inner = isGroup || flags.includes('n')
    const kind = title ? 'head' : odd ? 'stripe' : 'plain'

    return (
        <Row $kind={kind}>
            <NameCell scope="row">
                <Name>
                    <Slot $wide>
                        {title && <Toggle aria-label={'Collapse ' + title}><Chevron open /></Toggle>}
                    </Slot>
                    {inner && (
                        <Slot $start>
                            {isGroup && <Toggle aria-label={'Toggle ' + label}><Chevron open={flags.includes('o')} /></Toggle>}
                        </Slot>
                    )}
                    <Slot>{!blank && <RowIcon />}</Slot>
                    <NameText $head={title}>{title || label}</NameText>
                </Name>
            </NameCell>
            {values.map((value, i) => (
                <Cell key={i} $hot={i === 0 && flags.includes('h')}>{value}</Cell>
            ))}
        </Row>
    )
}

const SensorPanel = ({ panel }) => (
    <Panel aria-label={panel.name}>
        <List>
            <Table>
                <colgroup>
                    {panel.widths.map((width, i) => <col key={i} width={width} />)}
                </colgroup>
                <thead>
                    <tr>
                        <HeadCell $left $tall={panel.tall}>Sensor</HeadCell>
                        {['Current', 'Minimum', 'Maximum', 'Average'].map(name => (
                            <HeadCell key={name}>{name}</HeadCell>
                        ))}
                    </tr>
                </thead>
                <tbody>
                    {flatten(panel).map((line, i) => (
                        <SensorRow key={i} line={line} odd={(i + (i >= panel.flipAt ? 1 : 0)) % 2 === 0} />
                    ))}
                </tbody>
                {panel.filler && (
                    <tfoot>
                        <tr>
                            {panel.widths.map((width, i) => <Filler key={i} />)}
                        </tr>
                    </tfoot>
                )}
            </Table>
        </List>
        {panel.scroll && (
            <ScrollBar>
                <ScrollArrow $lit={panel.scroll.lit} aria-label="Scroll up">
                    <svg width="8" height="8" viewBox="0 0 8 8" fill="none" stroke="#777" strokeWidth="1.5"><path d="M1 5.5 4 2.5 7 5.5" /></svg>
                </ScrollArrow>
                <Thumb $part={panel.scroll.thumb} />
                <Track $part={panel.scroll.rest} />
                <ScrollArrow $lit={panel.scroll.lit} aria-label="Scroll down">
                    <svg width="8" height="8" viewBox="0 0 8 8" fill="none" stroke="#777" strokeWidth="1.5"><path d="M1 2.5 4 5.5 7 2.5" /></svg>
                </ScrollArrow>
            </ScrollBar>
        )}
    </Panel>
)

const App = () => {
    return (
        <Window>
            <GlobalStyle />
            <TitleBar>
                <AppIcon size={13} />
                <Title>HWiNFO64 v7.68-5300 - Sensors Status</Title>
                <WindowButton aria-label="Minimize">
                    <svg width="9" height="9" viewBox="0 0 9 9" stroke="#ddd"><path d="M0 4.5h9" /></svg>
                </WindowButton>
                <WindowButton aria-label="Restore">
                    <svg width="9" height="9" viewBox="0 0 9 9" stroke="#ddd" fill="none"><path d="M.5 2.5h6v6h-6ZM2.5 2.5v-2h6v6h-2" /></svg>
                </WindowButton>
                <WindowButton aria-label="Close">
                    <svg width="9" height="9" viewBox="0 0 9 9" stroke="#ddd"><path d="m.5 .5 8 8M8.5 .5l-8 8" /></svg>
                </WindowButton>
            </TitleBar>
            <Panels>
                {panels.map(panel => <SensorPanel key={panel.name} panel={panel} />)}
            </Panels>
            <Toolbar>
                <ToolGroup>
                    <ToolButton aria-label="Add column"><ExpandIcon /></ToolButton>
                    <ToolButton aria-label="Remove column"><ShrinkIcon /></ToolButton>
                </ToolGroup>
                <ToolButton aria-label="Remote monitoring"><NetworkIcon /></ToolButton>
                <Elapsed>0:05:31</Elapsed>
                <ToolButton aria-label="Reset values"><ClockIcon /></ToolButton>
                <ToolButton aria-label="Start logging"><LogIcon /></ToolButton>
                <ToolButton aria-label="Settings"><GearIcon /></ToolButton>
                <ToolButton aria-label="Close sensors" $focused><ExitIcon /></ToolButton>
            </Toolbar>
            <TaskBar>
                <Tasks>
                    {tasks.map(task => (
                        <Task key={task.name} aria-label={task.name} $running={task.running} $active={task.active}>
                            {task.icon}
                        </Task>
                    ))}
                </Tasks>
                <Tray>
                    <AppIcon size={13} />
                    <Glyph size={14}>
                        <rect width="20" height="20" fill="#e0103a" />
                        <path d="M5 5h10v10l-3-3V8H8Z M5 11l3-3v4h4l-3 3H5Z" fill="#fff" />
                    </Glyph>
                    <svg width="14" height="12" viewBox="0 0 14 12" fill="none" stroke="#e4e4e4">
                        <path d="M5 2.5h8.5v6H4.5M9 8.5v3M6 11.5h6M.5 .5h4v3.5h-4ZM2.5 4v7.5" />
                    </svg>
                    <svg width="15" height="12" viewBox="0 0 15 12" fill="none" stroke="#e4e4e4">
                        <path d="M.5 4v4h2.3L6 10.7V1.3L2.8 4ZM8 4q1.4 2 0 4M10 2.5q2.6 3.5 0 7" />
                        <path d="M12 1q4 5 0 10" stroke="#8a8a8a" />
                    </svg>
                    <span>ENG</span>
                    <Clock>17:02:16<br />28.01.2024</Clock>
                    <svg width="15" height="15" viewBox="0 0 15 15" fill="none" stroke="#e4e4e4">
                        <path d="M1 1.5h13v9.5H9.5L7.5 13.5 5.5 11H1Z" />
                    </svg>
                    <ShowDesktop aria-label="Show desktop" />
                </Tray>
            </TaskBar>
        </Window>
    )
}

export default App
